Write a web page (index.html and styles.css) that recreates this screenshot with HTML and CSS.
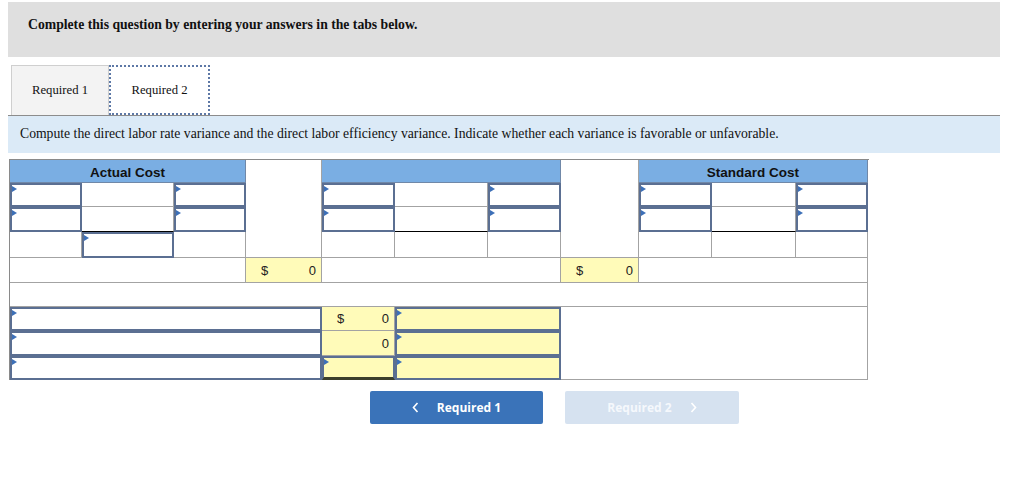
FILE: index.html
```html
<!DOCTYPE html>
<html>
<head>
<meta charset="utf-8">
<link rel="stylesheet" href="styles.css">
</head>
<body>
<div class="page">
  <div class="header">Complete this question by entering your answers in the tabs below.</div>
  <div class="tabs">
    <div class="tab tab-off">Required 1</div>
    <div class="tab tab-on">Required 2</div>
  </div>
  <div class="instr">Compute the direct labor rate variance and the direct labor efficiency variance. Indicate whether each variance is favorable or unfavorable.</div>

  <div class="grid">
    <!-- header row -->
    <div class="c head s3">Actual Cost</div>
    <div class="c rs4"></div>
    <div class="c head s3"></div>
    <div class="c rs4"></div>
    <div class="c head s3">Standard Cost</div>

    <!-- row 1 -->
    <div class="c in"><div class="box"></div></div>
    <div class="c"></div>
    <div class="c in"><div class="box"></div></div>
    <div class="c in"><div class="box"></div></div>
    <div class="c"></div>
    <div class="c in"><div class="box"></div></div>
    <div class="c in"><div class="box"></div></div>
    <div class="c"></div>
    <div class="c in"><div class="box"></div></div>

    <!-- row 2 -->
    <div class="c in"><div class="box"></div></div>
    <div class="c blk"></div>
    <div class="c in"><div class="box"></div></div>
    <div class="c in"><div class="box"></div></div>
    <div class="c blk"></div>
    <div class="c in"><div class="box"></div></div>
    <div class="c in"><div class="box"></div></div>
    <div class="c blk"></div>
    <div class="c in"><div class="box"></div></div>

    <!-- row 3 -->
    <div class="c"></div>
    <div class="c in"><div class="box"></div></div>
    <div class="c"></div>
    <div class="c"></div>
    <div class="c"></div>
    <div class="c"></div>
    <div class="c"></div>
    <div class="c"></div>
    <div class="c"></div>

    <!-- row 4 -->
    <div class="c s3"></div>
    <div class="c yel num"><span>$</span><span>0</span></div>
    <div class="c s3"></div>
    <div class="c yel num"><span>$</span><span>0</span></div>
    <div class="c s3"></div>

    <!-- row 5 -->
    <div class="c s11"></div>

    <!-- row 6 -->
    <div class="c in s4"><div class="box"></div></div>
    <div class="c yel num"><span>$</span><span>0</span></div>
    <div class="c in s2"><div class="box yb"></div></div>
    <div class="c s4 rs3"></div>

    <!-- row 7 -->
    <div class="c in s4"><div class="box"></div></div>
    <div class="c yel num"><span></span><span>0</span></div>
    <div class="c in s2"><div class="box yb"></div></div>

    <!-- row 8 -->
    <div class="c in s4"><div class="box"></div></div>
    <div class="c in"><div class="box yb dark"></div></div>
    <div class="c in s2"><div class="box yb"></div></div>
  </div>

  <div class="nav">
    <div class="btn btn-prev">
      <svg width="7" height="11" viewBox="0 0 7 11"><polyline points="5.5,1 1.5,5.5 5.5,10" fill="none" stroke="#ffffff" stroke-width="1.6"/></svg>
      <span>Required 1</span>
    </div>
    <div class="btn btn-next">
      <span>Required 2</span>
      <svg width="7" height="11" viewBox="0 0 7 11"><polyline points="1.5,1 5.5,5.5 1.5,10" fill="none" stroke="#ffffff" stroke-width="1.6"/></svg>
    </div>
  </div>
</div>
</body>
</html>
```

FILE: styles.css
```css
html, body {
  margin: 0;
  padding: 0;
  background: #ffffff;
}

.page {
  padding: 2px 0 0 8px;
  width: 992px;
  font-family: "Liberation Serif", "Times New Roman", serif;
  color: #111;
}

.header {
  height: 55px;
  background: #dfdfdf;
  box-sizing: border-box;
  padding: 15px 0 0 20px;
  font-weight: bold;
  font-size: 13.7px;
  line-height: 16px;
}

.tabs {
  display: flex;
  margin-top: 8px;
  padding-left: 3px;
  height: 50px;
}

.tab {
  box-sizing: border-box;
  height: 50px;
  display: flex;
  align-items: center;
  justify-content: center;
  font-size: 12.7px;
}

.tab-off {
  width: 98px;
  background: #f3f3f3;
  border: 1px solid #cfcfcf;
  border-bottom: none;
}

.tab-on {
  width: 101px;
  background: #ffffff;
  border: 2px dotted #5d78a6;
}

.instr {
  height: 38px;
  box-sizing: border-box;
  border-top: 1px solid #8c8c8c;
  background: #dbeaf7;
  padding: 10px 0 0 12px;
  font-size: 13.7px;
  line-height: 16px;
}

.grid {
  margin: 6px 0 0 1px;
  width: 859px;
  display: grid;
  grid-template-columns: 72px 92px 72px 76px 73px 93px 73px 78px 73px 84px 72px;
  grid-template-rows: 23px 24px 25px 26px 25px 24px 24px 25px 24px;
  border-top: 1px solid #8a8a8a;
  border-left: 1px solid #8a8a8a;
  font-family: "Liberation Sans", Arial, sans-serif;
}

.c {
  box-sizing: border-box;
  border-right: 1px solid #a3a3a3;
  border-bottom: 1px solid #a3a3a3;
  background: #ffffff;
}

.s2 { grid-column: span 2; }
.s3 { grid-column: span 3; }
.s4 { grid-column: span 4; }
.s11 { grid-column: span 11; }
.rs3 { grid-row: span 3; }
.rs4 { grid-row: span 4; }

.head {
  background: #7aaee3;
  border-right-color: #7088a8;
  border-bottom-color: #7088a8;
  font-weight: bold;
  font-size: 13.5px;
  text-align: center;
  padding-top: 2px;
  line-height: 21px;
  color: #111;
}

.blk {
  border-bottom-color: #000000;
}

.yel {
  background: #fffbb9;
}

.num {
  display: flex;
  justify-content: space-between;
  align-items: center;
  padding: 0 5px 0 15px;
  font-size: 13px;
  color: #222;
}

.in {
  border: none;
  padding: 0;
}

.box {
  position: relative;
  box-sizing: border-box;
  height: 100%;
  border: 2px solid #5b6f92;
  background: #ffffff;
}

.box::before {
  content: "";
  position: absolute;
  top: 1px;
  left: 0;
  width: 0;
  height: 0;
  border-left: 5px solid #3d70b8;
  border-top: 3px solid transparent;
  border-bottom: 3px solid transparent;
}

.yb {
  background: #fffbb9;
}

.dark {
  border-bottom: 3px solid #3c3f2c;
}

.nav {
  display: flex;
  gap: 22px;
  margin: 11px 0 0 362px;
}

.btn {
  width: 173px;
  height: 33px;
  border-radius: 2px;
  display: flex;
  align-items: center;
  justify-content: center;
  gap: 18px;
  font-family: "Open Sans", "Liberation Sans", sans-serif;
  font-weight: bold;
  font-size: 12px;
  color: #ffffff;
}

.btn-prev {
  background: #3a73b9;
}

.btn-next {
  width: 174px;
  background: #d6e2f0;
  color: #f5f8fc;
}
```
